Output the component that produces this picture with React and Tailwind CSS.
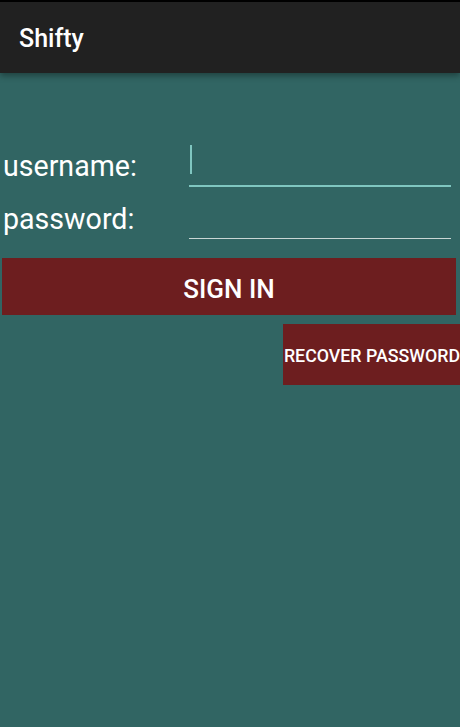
import React from 'react'

const App = () => {
  return (
    <div className="w-[460px] h-[727px] bg-[#316563] flex flex-col overflow-hidden font-['Roboto',sans-serif]">
      {/* 상단 상태바 + 툴바 */}
      <div className="h-[2px] bg-black" />
      <div className="relative h-[71px] bg-[#212121] flex items-center px-[19px] shadow-[0_3px_6px_rgba(0,0,0,0.35)] z-10">
        <span className="text-white text-[25px] font-medium leading-none pt-[1px]">Shifty</span>
      </div>

      {/* 로그인 폼 */}
      <div className="flex flex-col pt-[68px]">
        <div className="flex items-end h-[46px]">
          <span className="w-[189px] pl-[3px] text-white text-[28.6px] leading-none pb-[6px]">username:</span>
          <div className="relative w-[262px] h-[46px] border-b-2 border-[#7fc6c0]">
            <div className="absolute left-[1px] top-[4px] w-[2px] h-[29px] bg-[#7fc6c0]" />
          </div>
        </div>
        <div className="flex items-end h-[52px]">
          <span className="w-[189px] pl-[3px] text-white text-[28.6px] leading-none pb-[5px]">password:</span>
          <div className="w-[262px] h-[46px] border-b border-[#c9d6d4]" />
        </div>

        <div className="pl-[2px] pt-[19px]">
          <button className="w-[454px] h-[57px] bg-[#6d1e1f] text-white text-[26px] font-medium flex items-center justify-center pt-[6px]">
            SIGN IN
          </button>
        </div>
        <div className="flex justify-end pt-[9px]">
          <button className="w-[177px] h-[61px] bg-[#6d1e1f] text-white text-[17.8px] font-medium flex items-center justify-end whitespace-nowrap overflow-hidden pt-[3px]">
            RECOVER PASSWORD
          </button>
        </div>
      </div>
    </div>
  )
}

export default App
